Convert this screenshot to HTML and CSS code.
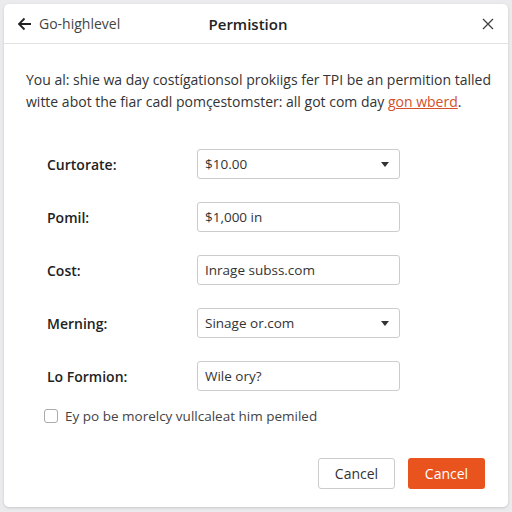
FILE: index.html
```html
<!DOCTYPE html>
<html lang="en">
<head>
    <meta charset="UTF-8">
    <meta name="viewport" content="width=device-width, initial-scale=1.0">
    <title>Permistion</title>
    <link rel="stylesheet" href="styles.css">
</head>
<body>
    <div class="dialog">
        <div class="dialog-header">
            <a class="back-link" href="#">
                <svg width="15" height="14" viewBox="0 0 15 14"><path d="M14 7H2M7.5 1.5L2 7l5.5 5.5" fill="none" stroke="#222" stroke-width="1.8"/></svg>
                <span>Go-highlevel</span>
            </a>
            <h2>Permistion</h2>
            <button class="btn-close" aria-label="Close">
                <svg width="12" height="12" viewBox="0 0 12 12"><path d="M1 1l10 10M11 1L1 11" stroke="#444" stroke-width="1.4"/></svg>
            </button>
        </div>

        <div class="dialog-body">
            <p class="intro">You al: shie wa day costígationsol prokiigs fer TPI be an permition talled<br>witte abot the fiar cadl pomçestomster: all got com day <a href="#">gon wberd</a>.</p>

            <div class="form-row">
                <label>Curtorate:</label>
                <div class="field select">$10.00</div>
            </div>
            <div class="form-row">
                <label>Pomil:</label>
                <div class="field">$1,000 in</div>
            </div>
            <div class="form-row">
                <label>Cost:</label>
                <div class="field">Inrage subss.com</div>
            </div>
            <div class="form-row">
                <label>Merning:</label>
                <div class="field select">Sinage or.com</div>
            </div>
            <div class="form-row">
                <label>Lo Formion:</label>
                <div class="field">Wile ory?</div>
            </div>

            <label class="check-row">
                <span class="checkbox"></span>
                Ey po be morelcy vullcaleat him pemiled
            </label>
        </div>

        <div class="dialog-footer">
            <button class="btn-outline">Cancel</button>
            <button class="btn-primary">Cancel</button>
        </div>
    </div>
</body>
</html>
```

FILE: styles.css
```css
* { margin: 0; padding: 0; box-sizing: border-box; }
body { font-family: "Open Sans", "Liberation Sans", sans-serif; background: #ebebed; color: #222; width: 512px; height: 512px; padding: 4px 4px 5px 4px; }
.dialog { background: #fff; border-radius: 5px; box-shadow: 0 1px 3px rgba(0, 0, 0, 0.15); height: 503px; display: flex; flex-direction: column; }

.dialog-header { height: 40px; border-bottom: 1px solid #e2e2e2; display: flex; align-items: center; justify-content: space-between; padding: 0 14px 0 13px; position: relative; }
.back-link { display: flex; align-items: center; gap: 7px; color: #444; text-decoration: none; font-size: 14px; }
.dialog-header h2 { position: absolute; left: 0; right: 0; text-align: center; font-size: 15px; font-weight: 600; color: #222; pointer-events: none; margin-left: -16px; }
.btn-close { background: none; border: none; display: flex; cursor: pointer; }

.dialog-body { padding: 25px 16px 0 22px; }
.intro { font-size: 14px; line-height: 22px; color: #333; margin-bottom: 36px; white-space: nowrap; }
.intro a { color: #d4502a; text-decoration: underline; }

.form-row { display: flex; align-items: center; height: 30px; margin-bottom: 23px; padding-left: 21px; }
.form-row label { width: 150px; font-size: 14px; font-weight: 600; color: #222; }
.field { width: 203px; height: 30px; border: 1px solid #ccc; border-radius: 3px; display: flex; align-items: center; padding: 0 7px; font-size: 13.5px; color: #333; position: relative; }
.field.select::after { content: ""; position: absolute; right: 10px; top: 12px; border-left: 4px solid transparent; border-right: 4px solid transparent; border-top: 5px solid #333; }

.check-row { display: flex; align-items: center; gap: 7px; font-size: 13.5px; color: #444; padding-left: 18px; margin-top: -7px; }
.checkbox { width: 14px; height: 14px; border: 1px solid #aaa; border-radius: 3px; }

.dialog-footer { margin-top: auto; display: flex; justify-content: flex-end; gap: 13px; padding: 0 23px 18px 0; }
.btn-outline, .btn-primary { width: 77px; height: 31px; border-radius: 3px; font-family: inherit; font-size: 14px; cursor: pointer; }
.btn-outline { background: #fff; border: 1px solid #ccc; color: #333; }
.btn-primary { background: #e8531e; border: none; color: #fff; }
```
